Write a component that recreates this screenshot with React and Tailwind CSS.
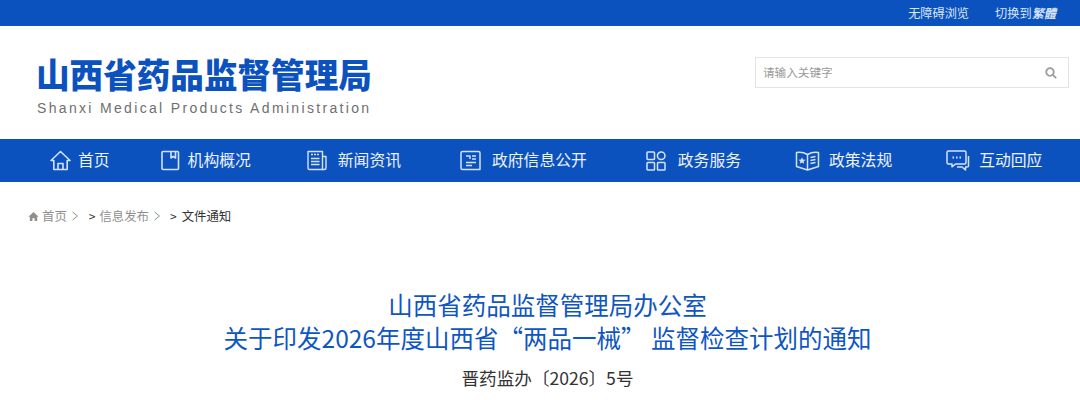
const cjk = { fontFamily: '"Noto Sans CJK SC", sans-serif' };

function Home() {
  return (
    <svg width="21" height="21" viewBox="0 0 21 21" fill="none" stroke="#d5e2f7" strokeWidth="1.6" strokeLinejoin="round">
      <path d="M1 10.5 10.5 1.5 20 10.5H17.2V19.5H3.8V10.5Z" />
      <path d="M8 19.5V13.5H13V19.5" />
    </svg>
  );
}
function Book() {
  return (
    <svg width="21" height="21" viewBox="0 0 21 21" fill="none" stroke="#d5e2f7" strokeWidth="1.6" strokeLinejoin="round">
      <rect x="2" y="1.5" width="16.5" height="18" rx="1" />
      <path d="M11 1.5V8L13.2 6.4 15.5 8V1.5" />
    </svg>
  );
}
function News() {
  return (
    <svg width="21" height="21" viewBox="0 0 21 21" fill="none" stroke="#d5e2f7" strokeWidth="1.4" strokeLinejoin="round">
      <path d="M2 1.5H16.5V19.5H3.5Q2 19.5 2 18Z" />
      <path d="M16.5 6.5H20V18Q20 19.5 18.2 19.5H16.5" />
      <path d="M5 4.5H13.5" strokeDasharray="2 1" />
      <path d="M5 8.5H13.5M5 11.5H13.5M5 14.5H13.5" />
    </svg>
  );
}
function Gov() {
  return (
    <svg width="21" height="21" viewBox="0 0 21 21" fill="none" stroke="#d5e2f7" strokeWidth="1.5" strokeLinejoin="round">
      <path d="M2.5 1.5H18.5Q20 1.5 20 3V19.5H2.5Q1 19.5 1 18V3Q1 1.5 2.5 1.5Z" />
      <path d="M6 6H10V9M12 6H16M12 9H16M6 12.5H16M6 15.5H12" />
    </svg>
  );
}
function Grid() {
  return (
    <svg width="20" height="20" viewBox="0 0 20 20" fill="none" stroke="#d5e2f7" strokeWidth="1.5">
      <rect x="1" y="1" width="7.5" height="7.5" rx="0.8" />
      <circle cx="15.2" cy="4.8" r="3.8" />
      <rect x="1" y="11.5" width="7.5" height="7.5" rx="0.8" />
      <rect x="11.5" y="11.5" width="7.5" height="7.5" rx="0.8" />
    </svg>
  );
}
function Law() {
  return (
    <svg width="25" height="21" viewBox="0 0 25 21" fill="none" stroke="#d5e2f7" strokeWidth="1.5" strokeLinejoin="round">
      <path d="M1.5 2.5Q7.5 1.5 12.5 4.5Q17.5 1.5 23.5 2.5V16.5L12.5 20 1.5 16.5Z" />
      <path d="M12.5 4.5V20" />
      <path d="M15.5 7.5 20.5 6.5M15.5 10.5 20.5 9.5M15.5 13.5 20.5 12.5" />
      <path d="M7 7.2 8 9.6 10.4 9.8 8.6 11.4 9.2 13.8 7 12.5 4.8 13.8 5.4 11.4 3.6 9.8 6 9.6Z" fill="#d5e2f7" stroke="none" />
    </svg>
  );
}
function Chat() {
  return (
    <svg width="24" height="21" viewBox="0 0 24 21" fill="none" stroke="#d5e2f7" strokeWidth="1.5" strokeLinejoin="round">
      <path d="M1 2.5Q1 1 2.5 1H18.5Q20 1 20 2.5V12.5Q20 14 18.5 14H9.5L6 16.8V14H2.5Q1 14 1 12.5Z" />
      <path d="M22.5 6V16Q22.5 17 21 17H19.5V20L16 17H11" />
      <path d="M6.5 7.5H8M10 7.5H11.5M13.5 7.5H15" strokeWidth="2" />
    </svg>
  );
}

const nav = [
  { label: "首页", icon: <Home />, ml: "ml-0", gap: "gap-[7px]" },
  { label: "机构概况", icon: <Book />, ml: "ml-[50px]", gap: "gap-[7px]" },
  { label: "新闻资讯", icon: <News />, ml: "ml-[55px]", gap: "gap-[11px]" },
  { label: "政府信息公开", icon: <Gov />, ml: "ml-[59px]", gap: "gap-[11px]" },
  { label: "政务服务", icon: <Grid />, ml: "ml-[59px]", gap: "gap-3" },
  { label: "政策法规", icon: <Law />, ml: "ml-[54px]", gap: "gap-[9px]" },
  { label: "互动回应", icon: <Chat />, ml: "ml-[54px]", gap: "gap-[9px]" },
];

function Chevron({ className }) {
  return (
    <svg className={className} width="8" height="10" viewBox="0 0 8 10" fill="none" stroke="#8f8f8f"><path d="M1.5 1 6.5 5 1.5 9" /></svg>
  );
}

export default function App() {
  return (
    <div className="w-[1080px] h-[400px] overflow-hidden bg-white" style={cjk}>
      <div className="h-[26px] bg-[#0c52bf] flex items-center justify-end pr-[24px] text-[12.2px] text-[#d9e5f8]">
        <span>无障碍浏览</span>
        <span className="ml-[26px]">切换到<b className="italic">繁體</b></span>
      </div>

      <div className="h-[113px] flex justify-between pl-[36px] pr-[11px]">
        <div className="pt-[27px] w-[336px]">
          <div className="text-[#0c52bf] text-[33.6px] leading-[42px] font-black whitespace-nowrap">山西省药品监督管理局</div>
          <div className="text-[#6f6f6f] text-sm leading-[18px] mt-[4px] pl-[1px] whitespace-nowrap tracking-[2.33px]" style={{ fontFamily: '"Liberation Sans", sans-serif' }}>
            Shanxi Medical Products Administration
          </div>
        </div>
        <div className="mt-[31px] w-[314px] h-[31px] border border-[#e4e4e4] flex items-center justify-between pl-[7px] pr-[11px]">
          <span className="text-[11.6px] text-[#9a9a9a]">请输入关键字</span>
          <svg width="12" height="12" viewBox="0 0 12 12" fill="none" stroke="#9b9b9b" strokeWidth="1.8">
            <circle cx="5" cy="5" r="3.8" />
            <path d="M7.8 7.8 11.2 11.2" />
          </svg>
        </div>
      </div>

      <div className="h-[43px] bg-[#0c52bf] flex items-center pl-[50px] text-[15.8px]">
        {nav.map((n) => (
          <div key={n.label} className={`flex items-center whitespace-nowrap ${n.ml} ${n.gap}`}>
            {n.icon}
            <span className="text-[#eef3fc] -mt-[1px]">{n.label}</span>
          </div>
        ))}
      </div>

      <div className="flex items-center h-[18px] mt-[25px] ml-[28px] text-[12.4px] text-[#8f8f8f] whitespace-nowrap">
        <svg width="11" height="11" viewBox="0 0 12 12" fill="#8f8f8f">
          <path d="M6 1 .5 6.2H2V11H4.8V7.8H7.2V11H10V6.2H11.5Z" />
        </svg>
        <span className="ml-[3px]">首页</span>
        <Chevron className="ml-[4px]" />
        <span className="ml-[10px] text-[#333] text-xs">&gt;</span>
        <span className="ml-[4px]">信息发布</span>
        <Chevron className="ml-[4px]" />
        <span className="ml-[9px] text-[#333] text-xs">&gt;</span>
        <span className="ml-[5px] text-[#333]">文件通知</span>
      </div>

      <div className="mt-[63px] pl-[15px] text-center text-[#0f56c2] text-[24.5px] leading-[34px]">
        <div>山西省药品监督管理局办公室</div>
        <div className="-mt-[1px]">关于印发2026年度山西省“两品一械” 监督检查计划的通知</div>
      </div>
      <div className="mt-[11px] pl-[15px] text-center text-[#333] text-[17.6px] leading-6">晋药监办〔2026〕5号</div>
    </div>
  );
}
